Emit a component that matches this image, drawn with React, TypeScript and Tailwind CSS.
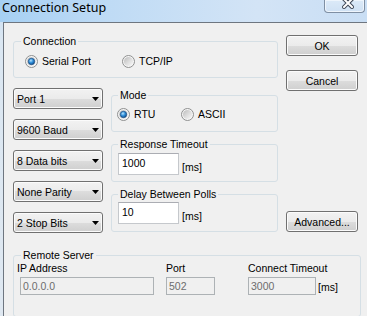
import React from 'react';

const ui = "font-['Liberation_Sans',Arial,sans-serif] text-[10.5px] leading-[12px] text-black";

const Radio = ({ id, checked, label, className = '' }: { id: string; checked?: boolean; label: string; className?: string }) => (
  <div className={`flex h-[14px] items-center ${className}`}>
    <svg width="13" height="13" viewBox="0 0 13 13" className="shrink-0">
      <defs>
        <linearGradient id={`rf-${id}`} x1="0" y1="0" x2="1" y2="1">
          <stop offset="0" stopColor="#bcbcbc" />
          <stop offset="1" stopColor="#fbfbfb" />
        </linearGradient>
        <radialGradient id={`rd-${id}`} cx="0.4" cy="0.35" r="0.75">
          <stop offset="0" stopColor="#b6e3fc" />
          <stop offset="0.45" stopColor="#2f8fdb" />
          <stop offset="1" stopColor="#0c3f78" />
        </radialGradient>
      </defs>
      <circle cx="6.5" cy="6.5" r="6" fill="#f6f6f6" stroke="#8e8f8f" />
      <circle cx="6.5" cy="6.5" r="4.6" fill={`url(#rf-${id})`} />
      {checked && <circle cx="6.5" cy="6.5" r="3.2" fill={`url(#rd-${id})`} stroke="#1a4c83" strokeWidth="0.7" />}
    </svg>
    <span className="ml-[4px]">{label}</span>
  </div>
);

const Button = ({ label, className = '' }: { label: string; className?: string }) => (
  <div className={`flex h-[21px] w-[72px] items-center justify-center rounded-[3px] border border-[#707070] bg-[linear-gradient(#f2f2f2,#ebebeb_50%,#dddddd_50%,#cfcfcf)] shadow-[inset_0_0_0_1px_#fbfbfb] ${className}`}>
    {label}
  </div>
);

const Combo = ({ value }: { value: string }) => (
  <div className="flex h-[21px] w-[90px] items-center justify-between rounded-[3px] border border-[#707070] bg-[linear-gradient(#f2f2f2,#ebebeb_50%,#dddddd_50%,#cfcfcf)] pl-[3px] pr-[3px] shadow-[inset_0_0_0_1px_#fbfbfb]">
    <span>{value}</span>
    <svg width="7" height="4" viewBox="0 0 7 4">
      <path d="M0 0h7L3.5 4z" fill="#000" />
    </svg>
  </div>
);

const Edit = ({ value, className = '' }: { value: string; className?: string }) => (
  <div className={`h-[22px] w-[61px] border border-[#c5c8cc] border-t-[#abadb3] bg-white pl-[3px] pt-[3px] ${className}`}>{value}</div>
);

const DisabledEdit = ({ value, className = '' }: { value: string; className?: string }) => (
  <div className={`h-[18px] border border-[#adb2b5] bg-[#f0f0f0] pl-[2px] pt-[2px] text-[#6d6d6d] ${className}`}>{value}</div>
);

const Group = ({ title, legendMl = 'ml-[6px]', className = '', children }: { title: string; legendMl?: string; className?: string; children: React.ReactNode }) => (
  <fieldset className={`rounded-[3px] border border-[#d5dfe5] ${className}`}>
    <legend className={`px-[2px] ${legendMl}`}>{title}</legend>
    {children}
  </fieldset>
);

const App: React.FC = () => {
  return (
    <div className={`h-[316px] w-[367px] overflow-hidden bg-[linear-gradient(#c9def4,#dbe7f2_40px,#dfe8f1)] ${ui}`}>
      {/* title bar */}
      <div className="flex h-[22px] bg-[linear-gradient(90deg,#a6d0f3_0%,#bfdbf5_30%,#d3e4f6_70%,#c9def4_100%)]">
        <div className="pl-[2px] pt-[0px] font-['Noto_Sans','Open_Sans',sans-serif] text-[12.5px] leading-[16px] text-[#000]">Connection Setup</div>
        <div className="flex-1" />
        <div className="mr-[2px] flex h-[13px] w-[41px] justify-center overflow-hidden rounded-b-[4px] border border-t-0 border-[#7f8fa3] bg-[linear-gradient(#dceaf8,#cfe1f4)] pl-[6px] shadow-[inset_0_0_0_1px_#eef5fc]">
          <svg width="12" height="12" viewBox="0 0 12 12" className="-mt-[3px]">
            <path d="M2 2l8 8M10 2l-8 8" stroke="#3d4656" strokeWidth="4" strokeLinecap="square" />
            <path d="M2 2l8 8M10 2l-8 8" stroke="#ffffff" strokeWidth="2" strokeLinecap="square" />
          </svg>
        </div>
      </div>

      {/* client area */}
      <div className="ml-[3px] h-[294px] border-l border-t border-[#6e7680] bg-[#f0f0f0] pl-[9px] pt-[12px]">
        <div className="flex">
          <div className="w-[265px]">
            <Group title="Connection" legendMl="ml-[7px]" className="w-[265px]">
              <div className="flex pb-[9px] pl-[11px] pt-[7px]">
                <Radio id="serial" checked label="Serial Port" className="w-[97px]" />
                <Radio id="tcp" label="TCP/IP" />
              </div>
            </Group>

            <div className="flex items-start gap-[8px]">
              <div className="mt-[10px] flex flex-col gap-[10px]">
                <Combo value="Port 1" />
                <Combo value="9600 Baud" />
                <Combo value="8 Data bits" />
                <Combo value="None Parity" />
                <Combo value="2 Stop Bits" />
              </div>

              <div className="mt-[11px] w-[167px]">
                <Group title="Mode">
                  <div className="flex pb-[10px] pl-[5px] pt-[6px]">
                    <Radio id="rtu" checked label="RTU" className="w-[64px]" />
                    <Radio id="ascii" label="ASCII" />
                  </div>
                </Group>
                <Group title="Response Timeout" className="mt-[6px]">
                  <div className="flex pb-[6px] pl-[6px] pt-[3px]">
                    <Edit value="1000" />
                    <span className="mb-[2px] ml-[3px] self-end">[ms]</span>
                  </div>
                </Group>
                <Group title="Delay Between Polls" className="mt-[6px]">
                  <div className="flex pb-[7px] pl-[6px] pt-[2px]">
                    <Edit value="10" />
                    <span className="mb-[2px] ml-[3px] self-end">[ms]</span>
                  </div>
                </Group>
              </div>
            </div>
          </div>

          <div className="ml-[8px] flex w-[72px] flex-col">
            <Button label="OK" />
            <Button label="Cancel" className="mt-[14px]" />
            <Button label="Advanced..." className="mt-[120px]" />
          </div>
        </div>

        <Group title="Remote Server" legendMl="ml-[7px]" className="mt-[16px] w-[348px]">
          <div className="flex pb-[21px] pl-[3px] pt-[1px]">
            <div className="flex w-[149px] flex-col">
              <span>IP Address</span>
              <DisabledEdit value="0.0.0.0" className="ml-[3px] mt-[3px] w-[134px]" />
            </div>
            <div className="flex w-[82px] flex-col">
              <span>Port</span>
              <DisabledEdit value="502" className="mt-[3px] w-[49px]" />
            </div>
            <div className="flex flex-col">
              <span>Connect Timeout</span>
              <div className="mt-[3px] flex">
                <DisabledEdit value="3000" className="w-[68px]" />
                <span className="mb-[2px] ml-[2px] self-end">[ms]</span>
              </div>
            </div>
          </div>
        </Group>
      </div>
    </div>
  );
};

export default App;
